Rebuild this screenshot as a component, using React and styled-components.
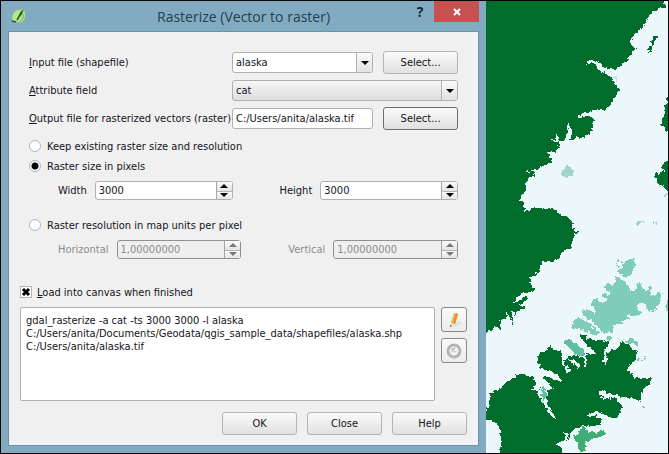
import React from "react";
import styled, { createGlobalStyle } from "styled-components";

const GlobalStyle = createGlobalStyle`
  * {
    box-sizing: border-box;
  }

  body {
    margin: 0;
    background: #050507;
    color: #141420;
    font: 11px/13px "DejaVu Sans Condensed", "DejaVu Sans", sans-serif;
  }

  button, input, select, textarea {
    margin: 0;
    color: inherit;
    font: inherit;
  }
`;

const Screen = styled.div`
  display: grid;
  grid-template-columns: minmax(0, 8fr) minmax(0, 3fr);
  padding: 1px;
`;

// WINDOW
const Window = styled.main`
  padding: 0 7px 7px;
  background: #82abc1;
`;

const TitleBar = styled.header`
  display: grid;
  grid-template-columns: 1fr auto 1fr;
  height: 30px;
`;

const Logo = styled.svg`
  width: 16px;
  height: 16px;
  margin: 7px 0 0 3px;
`;

const Title = styled.h1`
  margin: 0;
  color: #24404f;
  font: 400 14px/32px "Open Sans", "Noto Sans", sans-serif;
  white-space: nowrap;
`;

const WindowButtons = styled.div`
  display: flex;
  justify-content: flex-end;
  align-items: flex-start;
`;

const WindowButton = styled.button`
  display: flex;
  align-items: center;
  justify-content: center;
  width: ${(p) => (p.$close ? 45 : 28)}px;
  height: 21px;
  padding: 0;
  border: 0;
  background: ${(p) => (p.$close ? "#c75050" : "transparent")};
  color: #172a36;
  font: 700 14px/21px "Open Sans", "Noto Sans", sans-serif;
`;

const Panel = styled.form`
  padding: 19px 11px 10px;
  border: 1px solid #6b94ab;
  background: #f0f0f0;
  box-shadow: inset -4px -3px 0 #eef4f9;
`;

const Options = styled.div`
  padding: 0 9px;
`;

// FORM PARTS
const Fields = styled.div`
  display: grid;
  grid-template-columns: 203px minmax(0, 1fr) 75px;
  grid-auto-rows: 23px;
  row-gap: 5px;
  align-items: center;
  margin-bottom: 6px;
`;

const Label = styled.label`
  color: ${(p) => (p.$off ? "#8c8c8c" : "inherit")};
  white-space: nowrap;
`;

const Combo = styled.div`
  position: relative;
  grid-column: ${(p) => (p.$wide ? "span 2" : "auto")};
  margin-right: ${(p) => (p.$wide ? 0 : 10)}px;
`;

const Select = styled.select`
  display: block;
  width: 100%;
  height: 21px;
  padding: 0 20px 0 3px;
  border: 1px solid #b0b0b0;
  border-radius: 3px;
  appearance: none;
  background: ${(p) => (p.$editable ? "#fff" : "linear-gradient(#f6f6f6, #dedede)")};
`;

const ComboArrow = styled.span`
  position: absolute;
  top: 1px;
  right: 1px;
  bottom: 1px;
  display: flex;
  align-items: center;
  justify-content: center;
  width: 16px;
  border-left: 1px solid #b0b0b0;
  border-radius: 0 2px 2px 0;
  background: linear-gradient(#fafafa, #e2e2e2);
  pointer-events: none;
`;

const TextInput = styled.input`
  height: 21px;
  min-width: 0;
  margin-right: 10px;
  padding: 0 3px;
  border: 1px solid #b0b0b0;
  border-radius: 3px;
  background: #fff;
`;

const Button = styled.button`
  width: 75px;
  height: 23px;
  padding: 0;
  border: 1px solid ${(p) => (p.$focused ? "#6e6e6e" : "#b4b4b4")};
  border-radius: 3px;
  background: linear-gradient(#fbfbfb, #e0e0e0);
`;

const Choice = styled.label`
  display: flex;
  align-items: center;
  gap: ${(p) => p.$gap}px;
  height: 20px;
`;

const Radio = styled.input`
  width: 12px;
  height: 12px;
  border: 1px solid #b4b4b4;
  border-radius: 50%;
  appearance: none;
  background: #fff;

  &:checked {
    background: radial-gradient(circle, #000 0 3px, #fff 4px);
  }
`;

const SpinRow = styled.div`
  display: flex;
  align-items: center;
  gap: 8px;
  margin: 5px 0 ${(p) => p.$after}px 29px;

  label:nth-of-type(2) {
    margin-left: 39px;
  }
`;

const Spin = styled.div`
  display: flex;
  flex: 1;
  min-width: 0;
  height: 19px;
  border: 1px solid ${(p) => (p.$off ? "#8f8f8f" : "#b0b0b0")};
  border-radius: 3px;
  background: ${(p) => (p.$off ? "#efefef" : "#fff")};
`;

const SpinInput = styled.input`
  flex: 1;
  min-width: 0;
  padding: 0 3px;
  border: 0;
  background: transparent;

  &:disabled {
    color: #8c8c8c;
  }
`;

const SpinButtons = styled.div`
  display: grid;
  grid-template-rows: 1fr 1fr;
  width: 16px;
  border-left: 1px solid #a4a4a4;
`;

const SpinButton = styled.button`
  display: flex;
  align-items: center;
  justify-content: center;
  min-height: 0;
  padding: 0;
  border: 0;
  background: linear-gradient(#fafafa, #e4e4e4);

  & + & {
    border-top: 1px solid #b4b4b4;
  }
`;

const CheckBox = styled.span`
  display: grid;
  width: 12px;
  height: 12px;

  > * {
    grid-area: 1 / 1;
    width: 12px;
    height: 12px;
  }

  svg {
    pointer-events: none;
  }

  input:not(:checked) + svg {
    display: none;
  }
`;

const CheckInput = styled.input`
  border: 1px solid #b4b4b4;
  appearance: none;
  background: #fff;
`;

const CommandRow = styled.div`
  display: grid;
  grid-template-columns: minmax(0, 1fr) 26px;
  gap: 6px;
  margin: 5px 0 11px;
`;

const Command = styled.textarea`
  display: block;
  height: 94px;
  padding: 6px 5px;
  border: 1px solid #b0b0b0;
  border-radius: 2px;
  background: #fff;
  resize: none;
`;

const Tools = styled.div`
  display: flex;
  flex-direction: column;
  gap: 6px;
`;

const ToolButton = styled.button`
  display: flex;
  align-items: center;
  justify-content: center;
  height: 25px;
  padding: 0;
  border: 1px solid #8a8a8a;
  border-radius: 3px;
  background: linear-gradient(#fafafa, #ececec);
`;

const Footer = styled.footer`
  display: flex;
  justify-content: flex-end;
  gap: 10px;
`;

// MAP
const MapCanvas = styled.section`
  position: relative;
  overflow: hidden;
  background: #ebf7fa;

  svg {
    position: absolute;
    width: 100%;
    height: 100%;
  }
`;

const Arrow = ({ up, color = "#000" }) => (
  <svg width="8" height="4" viewBox="0 0 8 4" aria-hidden="true">
    <path d={up ? "M0 4 4 0l4 4z" : "M0 0h8L4 4z"} fill={color} />
  </svg>
);

const SpinBox = ({ id, label, value, off }) => (
  <>
    <Label htmlFor={id} $off={off}>{label}</Label>
    <Spin $off={off}>
      <SpinInput id={id} defaultValue={value} disabled={off} inputMode="decimal" />
      <SpinButtons>
        <SpinButton type="button" disabled={off} aria-label={`Increase ${label}`}>
          <Arrow up color={off ? "#777" : "#000"} />
        </SpinButton>
        <SpinButton type="button" disabled={off} aria-label={`Decrease ${label}`}>
          <Arrow color={off ? "#777" : "#000"} />
        </SpinButton>
      </SpinButtons>
    </Spin>
  </>
);

const land = [
  // western mainland
  "M0 -15H549L556 28 535 20 530 28 515 40 500 55 497 70 480 88 465 100 455 115 453 135 468 148 447 165 442 182 425 193 414 208 390 207 370 203 358 190 345 182 325 184 319 195 330 190 343 190 352 205 375 220 395 235 405 252 414 265 410 282 400 298 392 318 375 332 340 330 310 340 291 352 300 355 318 348 335 350 341 355V375L333 398 315 410 300 418 290 405 286 418 268 420 275 405 278 392 268 380 260 366 262 385 265 400 255 418 242 425 232 418 231 404 228 418 217 422 235 430 240 445 225 455 201 458 207 468 215 478 212 492 190 495 172 510 155 508 140 518 168 516 160 528 140 540 138 568 125 585 118 602H130L134 640 145 628 160 622 200 626 208 622 214 629 225 628 240 645 265 653 282 670 270 682 282 680 284 690 297 695 290 703 282 696 280 718 272 745 245 758 238 775 220 785H185L180 810 170 822 150 832 148 850 162 863 158 875 130 880 110 892 97 912 118 902 138 888 143 898 120 917 138 918 134 928 110 930 112 945 96 935 100 973 78 934 82 966 70 955 62 962 60 990 42 980 35 992 18 998H0Z",
  // southern peninsula
  "M0 1240L18 1235 30 1200 28 1185 45 1170 65 1165 75 1155 95 1135 125 1122 160 1128 165 1150 162 1165 148 1170 170 1172 182 1165 178 1190 185 1205 195 1215 205 1240 230 1258 228 1248 210 1232 200 1205 202 1170 225 1168 205 1150 187 1130 210 1132 240 1145 246 1140 225 1120 205 1110 185 1108 174 1090 176 1065 195 1055 210 1040 225 1050 245 1055 248 1075 245 1095 258 1100 260 1120 275 1108 252 1090 258 1078 285 1095 295 1105 300 1098 290 1085 265 1078 262 1070 285 1065 305 1075 318 1070 314 1100 322 1062 345 1062 325 1040 295 1002 320 1012 345 1022 370 1020 388 1027 375 1050 370 1080 372 1095 380 1095 380 1060 400 1050 418 1045 420 1030 445 1030 452 1045 470 1050 468 1080 450 1095 440 1110 455 1120 460 1135 480 1135 515 1132 510 1150 490 1170 480 1202 455 1195 430 1195 410 1185 385 1180 360 1172 352 1182 380 1188 368 1192 350 1194 372 1196 390 1192 405 1195 415 1202 428 1220 422 1240 405 1255 380 1248 365 1240 345 1235 320 1250 345 1248 362 1258 358 1275 335 1280 310 1275 285 1285 270 1300 265 1320 262 1295 252 1300 258 1320 240 1330 225 1330 245 1345 250 1375H62V1300L55 1275 40 1262 18 1258H0Z",
  // eastern shore and islet
  "M518 102L536 108 528 125 520 134 515 155 502 160 510 140 515 122Z",
  "M580 250L564 290 555 320 549 350 543 375 564 395 580 400Z",
  "M580 470L564 480 545 492 548 506 558 518 542 514 528 528 530 552 545 555 555 566 580 570Z",
];

const inlets = [
  "M322 192L330 186 345 187 356 203 375 215 400 230",
  "M294 352L312 343 345 338",
  "M262 368L270 392 258 420",
  "M230 405L231 421 218 424",
  "M165 1130L178 1180 195 1212 208 1238 228 1255",
  "M184 1116L205 1122 240 1142",
  "M355 1180L385 1187 425 1198",
  "M320 1250L345 1243",
  "M316 1070V1100",
  "M376 1055V1092",
  "M300 1025L345 1060",
];

const islands = [
  ["#9ed5cc", "M243 515L255 500 270 497 280 512 276 528 255 532 244 525Z"],
  ["#9ed5cc", "M465 670L480 660 492 665 478 672 468 678ZM516 660H521V671H517ZM528 667H532V671H528ZM549 584L562 577V588L555 590Z"],
  ["#c6dfe8", "M402 226L411 232 412 254 406 246 409 238Z"],
  ["#7fcdb9", "M466 776L452 778 440 784 428 792 430 804 415 812 418 822 430 826 440 834 458 820 466 800ZM412 784H416V788H412ZM424 786H428V794H424ZM412 794H420V798H412Z"],
  ["#7fcdb9", "M410 830L422 840 440 845 445 865 460 875 468 864 475 850 488 860 500 875 512 860 515 890 530 875 543 878 540 910 530 920 520 940 505 930 495 915 490 908 480 908 470 918 485 945 465 948 440 945 450 956 430 960 420 970 400 975 398 995 370 1000 345 975 330 960 310 950 308 930 325 930 350 940 335 915 332 900 345 893 370 907 388 900 365 890 362 880 385 885 390 875 370 860 385 850 400 855Z"],
  ["#7fcdb9", "M276 975L290 952 308 954 335 975 362 1002 342 1005 310 988 280 985ZM378 1012L392 1005 400 1014 390 1026 378 1018Z"],
  ["#7fcdb9", "M558 905L575 898V935L558 928Z"],
  ["#5fbf9f", "M252 1018L262 1014 290 1030 307 1045 315 1060 312 1070 290 1065 270 1045 255 1030ZM188 1160L196 1165 198 1190 190 1205 184 1185Z"],
  ["#7cc7b4", "M442 1020L455 1016 462 1022 476 1028 472 1035 445 1030ZM470 1074H479V1079H470ZM484 1084L498 1074 492 1084ZM484 1220L493 1213V1221Z"],
  ["#40ad76", "M282 1310L298 1298 302 1284 312 1280 325 1297 345 1295 372 1290 378 1302 350 1313 325 1320 315 1330 318 1350 300 1356 290 1345 298 1330 285 1325Z"],
];

const Map = () => (
  <MapCanvas aria-label="Map">
    <svg viewBox="18 3 546 1356" preserveAspectRatio="xMinYMin slice" shapeRendering="crispEdges">
      {/* roughens the coast lines */}
      <filter id="coast" colorInterpolationFilters="sRGB">
        <feTurbulence type="fractalNoise" baseFrequency="0.09" numOctaves="2" seed="4" result="noise" />
        <feDisplacementMap in="SourceGraphic" in2="noise" scale="18" xChannelSelector="R" yChannelSelector="G" />
      </filter>
      <g filter="url(#coast)">
        {land.map((d) => <path key={d} d={d} fill="#006d2c" />)}
        {inlets.map((d) => <path key={d} d={d} fill="none" stroke="#ebf7fa" strokeWidth="6" />)}
        {islands.map(([fill, d]) => <path key={d} d={d} fill={fill} />)}
      </g>
    </svg>
  </MapCanvas>
);

const command = `gdal_rasterize -a cat -ts 3000 3000 -l alaska
C:/Users/anita/Documents/Geodata/qgis_sample_data/shapefiles/alaska.shp
C:/Users/anita/alaska.tif`;

const App = () => (
  <>
    <GlobalStyle />
    <Screen>
      <Window>
        <TitleBar>
          <Logo viewBox="0 0 16 16" aria-hidden="true">
            <path d="M2 13C0 8 3 2 8 2l5-1c1 3 2 9-1 12-2 2-4 1-5 1z" fill="#b9e58a" />
            <path d="M12 6c1 3 0 6-3 7" fill="none" stroke="#6fae3e" strokeWidth="1" />
            <path d="M13 1C10 2 8 5 7 10c3-2 5-5 6-9z" fill="#2f7a35" />
            <path d="M1 13l4 1M6 12l5-8" stroke="#1f5a3a" strokeWidth="1.5" />
          </Logo>
          <Title>Rasterize (Vector to raster)</Title>
          <WindowButtons>
            <WindowButton type="button">?</WindowButton>
            <WindowButton type="button" $close aria-label="Close window">
              <svg width="8" height="8" viewBox="0 0 8 8" aria-hidden="true">
                <path d="M1 1l6 6M7 1L1 7" stroke="#fff" strokeWidth="2" />
              </svg>
            </WindowButton>
          </WindowButtons>
        </TitleBar>

        <Panel onSubmit={(e) => e.preventDefault()}>
          <Options>
            <Fields>
              <Label htmlFor="input-file"><u>I</u>nput file (shapefile)</Label>
              <Combo>
                <Select id="input-file" $editable><option>alaska</option></Select>
                <ComboArrow><Arrow /></ComboArrow>
              </Combo>
              <Button type="button">Select...</Button>

              <Label htmlFor="attribute"><u>A</u>ttribute field</Label>
              <Combo $wide>
                <Select id="attribute"><option>cat</option></Select>
                <ComboArrow><Arrow /></ComboArrow>
              </Combo>

              <Label htmlFor="output-file"><u>O</u>utput file for rasterized vectors (raster)</Label>
              <TextInput id="output-file" defaultValue="C:/Users/anita/alaska.tif" />
              <Button type="button" $focused>Select...</Button>
            </Fields>

            <Choice $gap={6}>
              <Radio type="radio" name="mode" />
              Keep existing raster size and resolution
            </Choice>
            <Choice $gap={6}>
              <Radio type="radio" name="mode" defaultChecked />
              Raster size in pixels
            </Choice>
            <SpinRow $after={15}>
              <SpinBox id="width" label="Width" value="3000" />
              <SpinBox id="height" label="Height" value="3000" />
            </SpinRow>
            <Choice $gap={6}>
              <Radio type="radio" name="mode" />
              Raster resolution in map units per pixel
            </Choice>
            <SpinRow $after={23}>
              <SpinBox id="horizontal" label="Horizontal" value="1,00000000" off />
              <SpinBox id="vertical" label="Vertical" value="1,00000000" off />
            </SpinRow>
          </Options>

          <Choice $gap={5}>
            <CheckBox>
              <CheckInput type="checkbox" defaultChecked />
              <svg viewBox="0 0 12 12" aria-hidden="true">
                <path d="M3 3l6 6M9 3L3 9" stroke="#000" strokeWidth="3" />
              </svg>
            </CheckBox>
            <span><u>L</u>oad into canvas when finished</span>
          </Choice>
          <CommandRow>
            <Command aria-label="Command" defaultValue={command} spellCheck={false} />
            <Tools>
              <ToolButton type="button" aria-label="Edit command">
                <svg width="16" height="16" viewBox="0 0 16 16" aria-hidden="true">
                  <path d="M5 15l8-7 3 3-6 4z" fill="#dfe3ea" />
                  <path d="M8 1l4 1-3 10-4-1z" fill="#f3b04a" />
                  <path d="M10 1l2 1-3 10-2-1z" fill="#df9426" />
                  <path d="M5 11l4 1-5 3z" fill="#f0d9b0" />
                  <path d="M4 13l2 1-2 1z" fill="#555" />
                </svg>
              </ToolButton>
              <ToolButton type="button" disabled aria-label="Reset command">
                <svg width="16" height="16" viewBox="0 0 16 16" fill="none" aria-hidden="true">
                  <circle cx="8" cy="8" r="6" fill="#f4f4f4" stroke="#b4b4b4" strokeWidth="3" />
                  <path d="M5 6l4-2 2 4-2 2-1-2-2 2z" fill="#c4c4c4" />
                  <path d="M7 8l4-4v4z" fill="#f4f4f4" />
                </svg>
              </ToolButton>
            </Tools>
          </CommandRow>
          <Footer>
            <Button type="submit">OK</Button>
            <Button type="button">Close</Button>
            <Button type="button">Help</Button>
          </Footer>
        </Panel>
      </Window>
      <Map />
    </Screen>
  </>
);

export default App;
